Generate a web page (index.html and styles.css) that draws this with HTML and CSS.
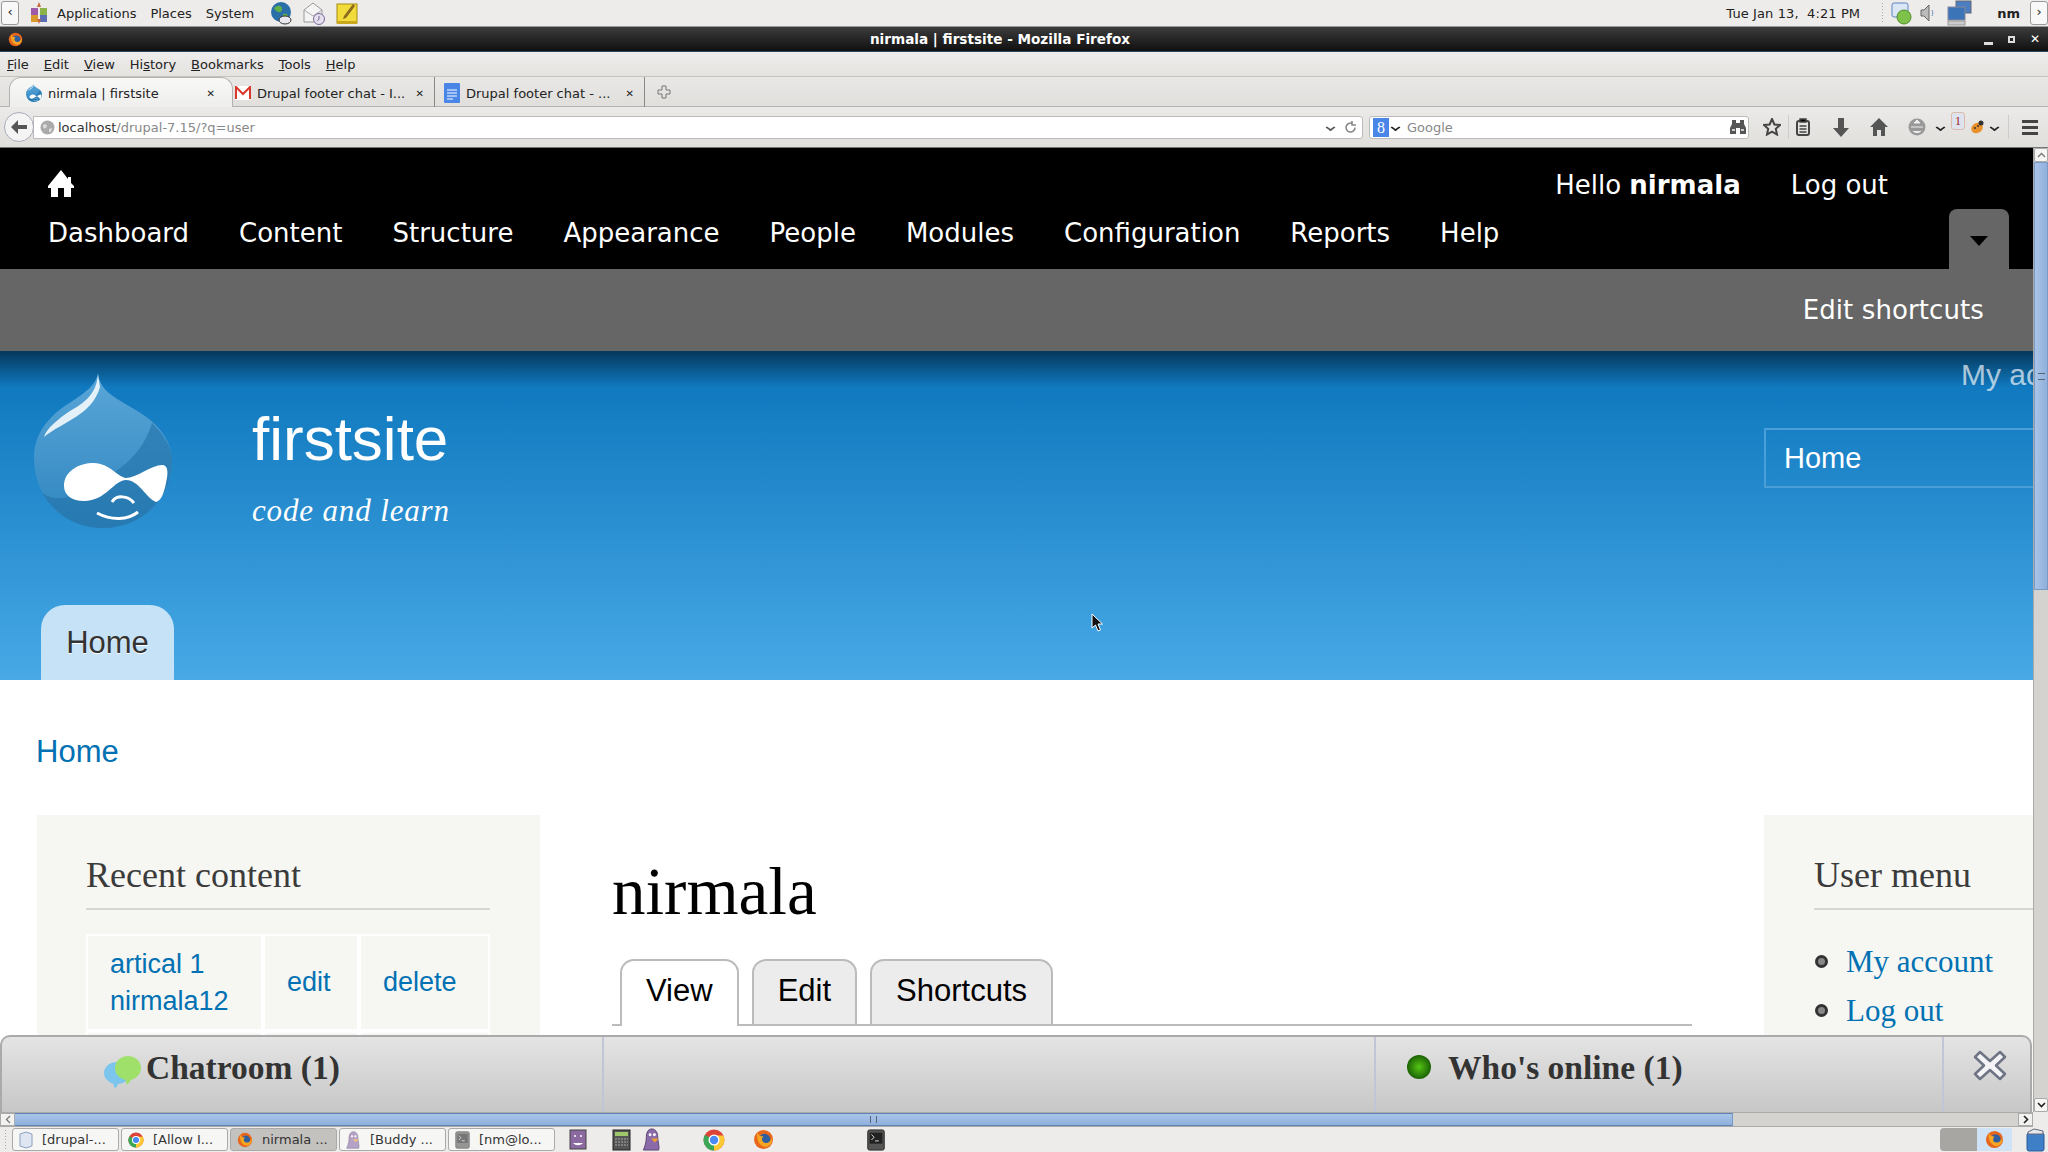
FILE: index.html
```html
<!DOCTYPE html>
<html lang="en">
<head>
    <meta charset="UTF-8">
    <title>nirmala | firstsite - Mozilla Firefox</title>
    <link rel="stylesheet" href="styles.css">
</head>
<body>
    <svg class="defs" width="0" height="0">
        <defs>
            <linearGradient id="dropFill" x1="0" y1="0" x2="0" y2="1">
                <stop offset="0" stop-color="#5aa6d8"/>
                <stop offset="1" stop-color="#2f86bf"/>
            </linearGradient>
            <symbol id="drupal" viewBox="0 0 138 156">
                <path d="M64 0C66 18 80 24 100 36C125 50 138 68 138 88C138 125 108 155 69 155C30 155 0 125 0 85C0 55 22 38 40 27C52 19 62 12 64 0Z" fill="url(#dropFill)"/>
                <path d="M118 50C134 66 138 78 138 88C138 125 108 155 69 155C40 155 20 140 8 120C30 135 55 115 82 98C100 86 112 70 118 50Z" fill="#2272a8" opacity=".6"/>
                <path d="M64 2C62 22 50 30 36 38C24 46 12 56 10 64C30 48 58 42 66 14Z" fill="#fff" opacity=".85"/>
                <path d="M30 113C30 98 45 90 60 90C75 90 85 105 92 105C102 105 118 92 128 92C135 92 134 102 132 110C130 120 127 128 122 129C112 125 105 107 92 107C80 107 72 128 50 128C38 128 30 122 30 113Z" fill="#fff"/>
                <path d="M63 140C78 148 94 147 104 139M78 129C82 122 94 122 100 130" fill="none" stroke="#fff" stroke-width="3"/>
            </symbol>
            <symbol id="firefox" viewBox="0 0 20 20">
                <circle cx="10" cy="10" r="9" fill="#e8661c"/>
                <circle cx="11" cy="10" r="5.5" fill="#2f5f9e"/>
                <path d="M4 3C3 10 6 17 13 17C17 16 19 12 18 8C17 12 14 14 11 13C8 12 8 9 10 7C7 7 5 6 4 3Z" fill="#f6a623"/>
            </symbol>
            <symbol id="chrome" viewBox="0 0 20 20">
                <circle cx="10" cy="10" r="9.5" fill="#dc4437"/>
                <path d="M10 10L1.8 5.2A9.5 9.5 0 0 0 10 19.5Z" fill="#3aa757"/>
                <path d="M10 10L10 19.5A9.5 9.5 0 0 0 18.6 6H10Z" fill="#fcc934"/>
                <circle cx="10" cy="10" r="5" fill="#fff"/>
                <circle cx="10" cy="10" r="3.8" fill="#4a8af4"/>
            </symbol>
            <symbol id="pidgin" viewBox="0 0 20 24">
                <path d="M10 1C5 1 4 6 4 11C4 16 2 20 1 23H17C18 19 16 14 16 10C16 5 14 1 10 1Z" fill="#8a6aa8" stroke="#5b4472"/>
                <circle cx="8" cy="7" r="1.5" fill="#fff"/>
                <circle cx="12.5" cy="7" r="1.5" fill="#fff"/>
                <path d="M9 11H17L13 15Z" fill="#f0a030"/>
            </symbol>
            <symbol id="terminal" viewBox="0 0 20 24">
                <rect x="1" y="1" width="18" height="22" rx="2" fill="#555" stroke="#222"/>
                <rect x="3" y="4" width="14" height="12" fill="#222"/>
                <path d="M5 6L8 9L5 12M9 13H13" fill="none" stroke="#eee"/>
            </symbol>
        </defs>
    </svg>

    <!-- desktop top panel -->
    <div class="panel">
        <span class="panel-btn">&#8249;</span>
        <svg class="app-logo" width="20" height="22" viewBox="0 0 20 22">
            <rect x="2" y="6" width="7" height="7" fill="#9c5aa8"/>
            <rect x="11" y="6" width="7" height="7" fill="#8bb34a"/>
            <rect x="2" y="13" width="7" height="7" fill="#d99a2b"/>
            <rect x="11" y="13" width="7" height="7" fill="#5d6fb3"/>
            <path d="M10 0L12 5H8ZM10 22L8 17H12Z" fill="#c8663c"/>
        </svg>
        <span class="panel-item">Applications</span>
        <span class="panel-item">Places</span>
        <span class="panel-item">System</span>
        <div class="launchers">
            <svg width="22" height="24" viewBox="0 0 22 24"><circle cx="11" cy="11" r="10" fill="#2a6fa8"/><path d="M4 7C8 3 13 5 12 9C10 13 6 11 4 7ZM13 13C17 12 19 14 17 18L13 17Z" fill="#5fae4a"/><ellipse cx="15" cy="19" rx="6" ry="4" fill="#e8e8ee" stroke="#333"/></svg>
            <svg width="22" height="24" viewBox="0 0 22 24"><path d="M1 9L10 2L19 9V21H1Z" fill="#f4f4f4" stroke="#999"/><path d="M1 9L10 15L19 9" fill="none" stroke="#aaa"/><circle cx="16" cy="18" r="5.5" fill="#e6e0ee" stroke="#7a6a98"/><path d="M16 15V18L14.5 20" fill="none" stroke="#7a6a98"/></svg>
            <svg width="22" height="24" viewBox="0 0 22 24"><rect x="1" y="3" width="20" height="19" fill="#f2dc3c" stroke="#a58a10"/><rect x="1" y="20" width="20" height="3" fill="#c9a820"/><path d="M8 15L17 3L19 5L10 17L7 18Z" fill="#8a6a1c"/></svg>
        </div>
        <div class="panel-right">
            <span class="clock">Tue Jan 13, &nbsp;4:21 PM</span>
            <span class="tray-dots"></span>
            <svg width="21" height="24" viewBox="0 0 21 24"><rect x="1" y="2" width="16" height="14" rx="2" fill="#dbe7f6" stroke="#5a86c0"/><circle cx="13" cy="16" r="7" fill="#7fc24a" stroke="#4f8f2a"/></svg>
            <svg class="tray-sound" width="15" height="22" viewBox="0 0 15 22"><path d="M1 8H4L9 3V19L4 14H1Z" fill="#bbb" stroke="#666"/><path d="M12 8C13 10 13 12 12 14" fill="none" stroke="#6a8fc0"/></svg>
            <svg class="tray-net" width="26" height="26" viewBox="0 0 26 26"><rect x="9" y="1" width="15" height="12" fill="#4a7ec0" stroke="#667"/><rect x="1" y="7" width="17" height="13" fill="#3c74b8" stroke="#889"/><rect x="1" y="21" width="17" height="4" fill="#ccc" stroke="#999"/></svg>
            <span class="panel-user">nm</span>
            <span class="panel-btn">&#8250;</span>
        </div>
    </div>

    <!-- window title -->
    <div class="titlebar">
        <svg class="title-icon" width="15" height="15"><use href="#firefox"/></svg>
        <span class="title-text">nirmala | firstsite - Mozilla Firefox</span>
        <div class="win-btns">
            <span class="win-min"></span>
            <span class="win-max"></span>
            <span class="win-close">&#10005;</span>
        </div>
    </div>

    <div class="menubar">
        <span><u>F</u>ile</span>
        <span><u>E</u>dit</span>
        <span><u>V</u>iew</span>
        <span>Hi<u>s</u>tory</span>
        <span><u>B</u>ookmarks</span>
        <span><u>T</u>ools</span>
        <span><u>H</u>elp</span>
    </div>

    <div class="tabstrip">
        <div class="ff-tab ff-tab-active">
            <svg width="16" height="18"><use href="#drupal"/></svg>
            <span class="ff-tab-label">nirmala | firstsite</span>
            <span class="ff-tab-x">&#10005;</span>
        </div>
        <div class="ff-tab ff-tab-second">
            <svg width="16" height="14" viewBox="0 0 16 14"><rect width="16" height="14" fill="#fff"/><path d="M1 13V1L8 8L15 1V13" fill="none" stroke="#d9372c" stroke-width="2"/></svg>
            <span class="ff-tab-label">Drupal footer chat - I...</span>
            <span class="ff-tab-x">&#10005;</span>
        </div>
        <div class="ff-tab">
            <svg width="16" height="20" viewBox="0 0 16 20"><rect width="16" height="20" rx="1" fill="#4a86e8"/><path d="M3 7H13M3 10H13M3 13H13M3 16H9" stroke="#fff"/></svg>
            <span class="ff-tab-label">Drupal footer chat - ...</span>
            <span class="ff-tab-x">&#10005;</span>
        </div>
        <svg class="newtab" width="14" height="14" viewBox="0 0 14 14"><path d="M5 1H9V5H13V9H9V13H5V9H1V5H5Z" fill="none" stroke="#777"/></svg>
    </div>

    <div class="navbar">
        <span class="back-btn">
            <svg width="16" height="14" viewBox="0 0 16 14"><path d="M7 0L0 7L7 14V9H16V5H7Z" fill="#555"/></svg>
        </span>
        <div class="urlbar">
            <svg width="15" height="15" viewBox="0 0 15 15"><circle cx="7.5" cy="7.5" r="7" fill="#aaa"/><path d="M3 5C6 3 8 6 6 8C4 9 3 8 3 5ZM9 9L12 8L11 12L9 12Z" fill="#ddd"/></svg>
            <span class="url-text"><b>localhost</b>/drupal-7.15/?q=user</span>
            <span class="url-drop"></span>
            <svg class="url-reload" width="13" height="13" viewBox="0 0 13 13"><path d="M11 6.5A4.5 4.5 0 1 1 8.5 2.5M8 0V4H12" fill="none" stroke="#888" stroke-width="1.6"/></svg>
        </div>
        <div class="searchbar">
            <span class="g-icon">8</span>
            <span class="url-drop dark"></span>
            <span class="search-text">Google</span>
            <svg class="binoculars" width="16" height="16" viewBox="0 0 16 16"><path d="M2 1H6V4H10V1H14V5L16 9V15H10V9H6V15H0V9L2 5Z" fill="#555"/><path d="M2 11H5M11 11H14" stroke="#ccc" stroke-width="2"/></svg>
        </div>
        <div class="nav-icons">
            <svg class="ic-star" width="18" height="18" viewBox="0 0 18 18"><path d="M9 1L11.4 6.5L17 7L12.8 10.8L14 16.5L9 13.6L4 16.5L5.2 10.8L1 7L6.6 6.5Z" fill="none" stroke="#444" stroke-width="2"/></svg>
            <span class="ic-sep"></span>
            <svg class="ic-clip" width="14" height="18" viewBox="0 0 14 18"><rect x="1" y="3" width="12" height="14" rx="2" fill="none" stroke="#444" stroke-width="2"/><path d="M4 1H10V4H4ZM3.500 8H10.500M3.500 11H10.500M3.500 14H10.500" stroke="#444" stroke-width="1.500"/></svg>
            <svg class="ic-down" width="16" height="19" viewBox="0 0 16 19"><path d="M5 0H11V10H16L8 19L0 10H5Z" fill="#555"/></svg>
            <svg class="ic-home" width="18" height="18" viewBox="0 0 18 18"><path d="M9 0L18 9H15V18H11V12H7V18H3V9H0Z" fill="#555"/></svg>
            <svg class="ic-mic" width="18" height="20" viewBox="0 0 18 20"><circle cx="9" cy="10" r="8.500" fill="#999"/><path d="M3 10H15M6 6L9 3L12 6ZM5 14C7 16 11 16 13 14" stroke="#eee" fill="#eee"/></svg>
            <span class="url-drop dark ic-chev"></span>
            <span class="ic-badge">1</span>
            <svg class="ic-bug" width="16" height="16" viewBox="0 0 16 16"><ellipse cx="8" cy="9" rx="6" ry="5" fill="#e8912c" transform="rotate(-30 8 9)"/><circle cx="12" cy="4" r="2.500" fill="#333"/><circle cx="6" cy="9" r="1" fill="#333"/><circle cx="9" cy="7" r="1" fill="#333"/></svg>
            <span class="url-drop dark ic-chev2"></span>
            <span class="ic-sep ic-sep2"></span>
            <span class="ic-burger"><i></i><i></i><i></i></span>
        </div>
    </div>

    <!-- browser content -->
    <div class="viewport">
        <div class="page">
            <div class="toolbar">
                <div class="toolbar-top">
                    <svg class="toolbar-home" width="26" height="27" viewBox="0 0 26 27"><path d="M13 0L20 9V7H23V13L26 16V18H23V27H16V18H10V27H3V18H0V16Z" fill="#fff"/></svg>
                    <div class="toolbar-user">
                        <span>Hello <b>nirmala</b></span>
                        <span>Log out</span>
                    </div>
                </div>
                <div class="toolbar-menu">
                    <a>Dashboard</a>
                    <a>Content</a>
                    <a>Structure</a>
                    <a>Appearance</a>
                    <a>People</a>
                    <a>Modules</a>
                    <a>Configuration</a>
                    <a>Reports</a>
                    <a>Help</a>
                </div>
                <div class="toolbar-toggle"><span></span></div>
            </div>
            <div class="shortcuts">Edit shortcuts</div>

            <div class="site-header">
                <div class="brand-row">
                    <svg class="logo" width="138" height="156"><use href="#drupal"/></svg>
                    <div class="site-name">
                        <h1>firstsite</h1>
                        <p>code and learn</p>
                    </div>
                    <div class="header-side">
                        <div class="secondary-menu">My account</div>
                        <div class="search-box">Home</div>
                    </div>
                </div>
                <div class="main-menu"><a>Home</a></div>
            </div>

            <div class="breadcrumb"><a>Home</a></div>

            <div class="columns">
                <div class="sidebar sidebar-left">
                    <h2>Recent content</h2>
                    <table class="recent">
                        <tr>
                            <td class="recent-title"><a>artical 1</a><br><a>nirmala12</a></td>
                            <td><a>edit</a></td>
                            <td><a>delete</a></td>
                        </tr>
                        <tr class="recent-next">
                            <td></td>
                            <td></td>
                            <td></td>
                        </tr>
                    </table>
                </div>
                <div class="main">
                    <h1 class="page-title">nirmala</h1>
                    <div class="tabs">
                        <a class="tab tab-active">View</a>
                        <a class="tab">Edit</a>
                        <a class="tab">Shortcuts</a>
                    </div>
                </div>
                <div class="sidebar sidebar-right">
                    <h2>User menu</h2>
                    <ul class="user-menu">
                        <li><a>My account</a></li>
                        <li><a>Log out</a></li>
                    </ul>
                </div>
            </div>

            <!-- footer chat stays over the page -->
            <div class="chatbar">
                <div class="chat-cell chat-room">
                    <svg width="40" height="36" viewBox="0 0 40 36"><ellipse cx="14" cy="20" rx="13" ry="11" fill="#7cc6ee"/><path d="M10 30L12 36L16 30Z" fill="#7cc6ee"/><ellipse cx="25" cy="15" rx="13" ry="12" fill="#9fe06a"/><path d="M22 26L24 32L29 26Z" fill="#9fe06a"/></svg>
                    <span>Chatroom (1)</span>
                </div>
                <div class="chat-cell chat-gap"></div>
                <div class="chat-cell chat-online">
                    <span class="online-dot"></span>
                    <span>Who's online (1)</span>
                </div>
                <div class="chat-cell chat-close">
                    <svg width="34" height="33" viewBox="0 0 34 33"><path d="M7 3L17 12L27 3L32 8L23 16.500L32 25L27 30L17 21L7 30L2 25L11 16.500L2 8Z" fill="#f4f4f6" stroke="#6f7484" stroke-width="2.500" stroke-linejoin="round"/></svg>
                </div>
            </div>

            <svg class="cursor" width="12" height="19" viewBox="0 0 12 19"><path d="M1 1V15L4.500 12L7 18L9.500 17L7 11H11.500Z" fill="#111" stroke="#fff"/></svg>
        </div>
        <div class="vscroll">
            <span class="vbtn"><svg width="9" height="6" viewBox="0 0 9 6"><path d="M1 5L4.500 1.500L8 5" fill="none" stroke="#777" stroke-width="1.300"/></svg></span>
            <div class="vthumb"><span></span></div>
            <span class="vtrack"></span>
            <span class="vbtn"><svg width="9" height="6" viewBox="0 0 9 6"><path d="M1 1L4.500 4.500L8 1" fill="none" stroke="#222" stroke-width="1.600"/></svg></span>
        </div>
    </div>

    <div class="hscroll-row">
        <div class="hscroll">
            <span class="hbtn"><svg width="6" height="9" viewBox="0 0 6 9"><path d="M5 1L1.500 4.500L5 8" fill="none" stroke="#777" stroke-width="1.300"/></svg></span>
            <div class="hthumb"><span></span></div>
            <span class="htrack"></span>
            <span class="hbtn"><svg width="6" height="9" viewBox="0 0 6 9"><path d="M1 1L4.500 4.500L1 8" fill="none" stroke="#222" stroke-width="1.600"/></svg></span>
        </div>
    </div>

    <!-- desktop bottom panel -->
    <div class="taskbar">
        <span class="tray-dots task-dots"></span>
        <div class="task"><svg width="14" height="18" viewBox="0 0 14 18"><path d="M1 3L7 1L13 3V15L7 17L1 15Z" fill="#dfe6f2" stroke="#8aa0c0"/></svg><span>[drupal-...</span></div>
        <div class="task"><svg width="16" height="16"><use href="#chrome"/></svg><span>[Allow I...</span></div>
        <div class="task task-active"><svg width="16" height="16"><use href="#firefox"/></svg><span>nirmala ...</span></div>
        <div class="task"><svg class="faded" width="15" height="18"><use href="#pidgin"/></svg><span>[Buddy ...</span></div>
        <div class="task"><svg class="faded" width="15" height="18"><use href="#terminal"/></svg><span>[nm@lo...</span></div>
        <div class="quick">
            <svg class="q1" width="18" height="21" viewBox="0 0 18 21"><rect x="1" y="1" width="16" height="19" fill="#8a6aa0" stroke="#444"/><path d="M4 14C7 17 11 17 14 14Z" fill="#fff"/><circle cx="6" cy="7" r="1" fill="#fff"/><circle cx="12" cy="7" r="1" fill="#fff"/></svg>
            <svg class="q2" width="19" height="22" viewBox="0 0 19 22"><rect x="1" y="1" width="17" height="20" fill="#555" stroke="#222"/><rect x="3" y="3" width="13" height="4" fill="#9fc76a"/><path d="M3 10H16M3 13H16M3 16H16" stroke="#aaa" stroke-dasharray="2 1"/></svg>
            <svg class="q3" width="20" height="23"><use href="#pidgin"/></svg>
            <svg class="q4" width="22" height="22"><use href="#chrome"/></svg>
            <svg class="q5" width="21" height="21"><use href="#firefox"/></svg>
            <svg class="q6" width="20" height="22"><use href="#terminal"/></svg>
        </div>
        <div class="task-right">
            <span class="pager-a"></span>
            <span class="pager-b"><svg width="19" height="19"><use href="#firefox"/></svg></span>
            <svg class="trash" width="19" height="24" viewBox="0 0 19 24"><rect x="1" y="5" width="17" height="18" rx="2" fill="#3f7fc8" stroke="#2a5a98"/><path d="M2 4L8 1L17 3L17 6H2Z" fill="#e4e8ee" stroke="#667"/></svg>
        </div>
    </div>
</body>
</html>
```
FILE: styles.css
```css
* {
    margin: 0;
    padding: 0;
    box-sizing: border-box;
}

html, body {
    width: 2048px;
    height: 1152px;
    overflow: hidden;
}

body {
    font-family: "DejaVu Sans", sans-serif;
    font-size: 13px;
    color: #222;
    background-color: #edecea;
    display: flex;
    flex-direction: column;
}

svg {
    flex: none;
    display: block;
}

.defs {
    position: absolute;
}

/* top panel */
.panel {
    height: 27px;
    flex: none;
    display: flex;
    align-items: center;
    background-color: #edecea;
    border-bottom: 1px solid #9a9a98;
    padding-left: 1px;
}

.panel-btn {
    width: 18px;
    height: 24px;
    border: 1px solid #999;
    border-radius: 3px;
    background-color: #f8f8f8;
    text-align: center;
    line-height: 20px;
    flex: none;
}

.app-logo {
    margin-left: 10px;
    margin-right: 8px;
}

.panel-item {
    margin-right: 14px;
}

.launchers {
    display: flex;
    gap: 11px;
    margin-left: 2px;
}

.panel-right {
    margin-left: auto;
    display: flex;
    align-items: center;
}

.clock {
    margin-right: 21px;
    letter-spacing: .1px;
}

.tray-dots {
    width: 4px;
    height: 22px;
    margin-right: 6px;
    background-image: radial-gradient(#aaa 1px, transparent 1px);
    background-size: 3px 3px;
}

.tray-sound {
    margin-left: 8px;
}

.tray-net {
    margin-left: 12px;
}

.panel-user {
    font-weight: bold;
    margin-left: 24px;
    margin-right: 10px;
}

/* window title */
.titlebar {
    height: 25px;
    flex: none;
    position: relative;
    display: flex;
    align-items: center;
    justify-content: center;
    color: #fff;
    font-weight: bold;
    font-size: 13.6px;
    background: linear-gradient(#3c3c3c, #101010);
    border-bottom: 1px solid #2d4a63;
}

.title-icon {
    position: absolute;
    left: 8px;
    top: 5px;
}

.title-text {
    margin-right: 48px;
}

.win-btns {
    position: absolute;
    right: 0;
    top: 0;
    height: 24px;
    display: flex;
    align-items: center;
}

.win-min {
    width: 9px;
    height: 3px;
    background-color: #ddd;
    margin-right: 15px;
    margin-top: 8px;
}

.win-max {
    width: 7px;
    height: 7px;
    border: 2px solid #ddd;
    margin-right: 15px;
}

.win-close {
    font-size: 12px;
    margin-right: 8px;
}

/* firefox chrome */
.menubar {
    height: 25px;
    flex: none;
    display: flex;
    align-items: center;
    gap: 15px;
    padding-left: 7px;
    background: linear-gradient(#eeedeb, #e4e3e0);
    border-bottom: 1px solid #c4c3c0;
}

.tabstrip {
    height: 30px;
    flex: none;
    display: flex;
    align-items: center;
    padding-left: 9px;
    background: linear-gradient(#e9e8e6, #e0dfdc);
    border-bottom: 1px solid #b4b3b0;
}

.ff-tab {
    height: 30px;
    width: 210px;
    display: flex;
    align-items: center;
    padding: 3px 10px 0 9px;
    border-right: 1px solid #888;
}

.ff-tab-active {
    width: 224px;
    height: 30px;
    padding-left: 16px;
    padding-right: 17px;
    padding-top: 1px;
    background: linear-gradient(#f8f8f7, #eeeeec);
    border: 1px solid #b4b3b0;
    border-bottom: 0;
    border-radius: 12px 12px 0 0;
    margin-top: 1px;
}

.ff-tab-second {
    width: 202px;
    padding-left: 2px;
}

.ff-tab-label {
    margin-left: 6px;
    white-space: nowrap;
    overflow: hidden;
}

.ff-tab-x {
    margin-left: auto;
    font-size: 10px;
    font-weight: bold;
}

.newtab {
    margin-left: 12px;
}

.navbar {
    height: 41px;
    flex: none;
    display: flex;
    align-items: center;
    background: linear-gradient(#ebeae8, #e0dfdc);
    border-bottom: 1px solid #777;
    padding-left: 4px;
}

.back-btn {
    width: 30px;
    height: 30px;
    flex: none;
    border: 1px solid #aab;
    border-radius: 50%;
    background-color: #f4f4f4;
    display: flex;
    align-items: center;
    justify-content: center;
    z-index: 1;
}

.urlbar {
    width: 1330px;
    height: 23px;
    margin-left: -1px;
    flex: none;
    background-color: #fff;
    border: 1px solid #bbb;
    border-radius: 0 3px 3px 0;
    display: flex;
    align-items: center;
    padding-left: 6px;
}

.url-text {
    font-size: 13px;
    color: #888;
    margin-left: 3px;
    padding-top: 1px;
}

.url-text b {
    font-weight: normal;
    color: #333;
}

.url-drop {
    width: 7px;
    height: 7px;
    border-right: 2px solid #555;
    border-bottom: 2px solid #555;
    transform: scale(1, .7) rotate(45deg);
    margin-left: auto;
    margin-right: 4px;
    flex: none;
}

.url-reload {
    margin: 0 5px 0 6px;
}

.searchbar {
    width: 380px;
    height: 23px;
    margin-left: 6px;
    flex: none;
    background-color: #fff;
    border: 1px solid #bbb;
    border-radius: 3px;
    display: flex;
    align-items: center;
    padding-left: 3px;
}

.g-icon {
    width: 16px;
    height: 19px;
    background-color: #4a86e8;
    color: #fff;
    text-align: center;
    font-family: "Liberation Serif", serif;
    font-size: 16px;
    line-height: 19px;
}

.url-drop.dark {
    margin-left: 3px;
    margin-right: 0;
    border-color: #222;
}

.search-text {
    font-size: 13px;
    color: #888;
    margin-left: 8px;
    padding-top: 1px;
}

.binoculars {
    margin-left: auto;
    margin-right: 2px;
}

.nav-icons {
    flex: 1;
    display: flex;
    align-items: center;
    position: relative;
    height: 100%;
}

.ic-star {
    margin-left: 14px;
}

.ic-sep {
    width: 1px;
    height: 24px;
    background-color: #ccc;
    margin-left: 7px;
}

.ic-clip {
    margin-left: 7px;
}

.ic-down {
    margin-left: 23px;
}

.ic-home {
    margin-left: 21px;
}

.ic-mic {
    margin-left: 20px;
}

.url-drop.ic-chev {
    margin-left: 11px;
}

.ic-badge {
    width: 14px;
    height: 18px;
    background-color: #dde4f0;
    border: 1px solid #dba;
    border-radius: 3px;
    color: #a01010;
    font-family: "Liberation Serif", serif;
    font-size: 12px;
    text-align: center;
    line-height: 16px;
    margin-left: 7px;
    margin-top: -12px;
}

.ic-bug {
    margin-left: 4px;
}

.url-drop.ic-chev2 {
    margin-left: 6px;
}

.ic-sep2 {
    margin-left: 10px;
}

.ic-burger {
    display: flex;
    flex-direction: column;
    gap: 3px;
    margin-left: 13px;
}

.ic-burger i {
    width: 16px;
    height: 3px;
    background-color: #444;
    display: block;
}

/* viewport */
.viewport {
    height: 964px;
    flex: none;
    display: flex;
    background-color: #fff;
    overflow: hidden;
}

.page {
    width: 2033px;
    height: 964px;
    position: relative;
    overflow: hidden;
    flex: none;
}

.vscroll {
    width: 15px;
    flex: none;
    display: flex;
    flex-direction: column;
    background-color: #d5d3d0;
    border-left: 1px solid #aaa;
}

.vbtn {
    height: 14px;
    flex: none;
    background-color: #f6f6f4;
    border: 1px solid #aaa;
    border-radius: 2px;
    display: flex;
    align-items: center;
    justify-content: center;
}

.vthumb {
    height: 428px;
    flex: none;
    background: linear-gradient(90deg, #a9c4e8, #8fb0dc);
    border: 1px solid #7a9ac6;
    display: flex;
    align-items: center;
    justify-content: center;
}

.vthumb span {
    width: 7px;
    height: 7px;
    border-top: 1px solid #567;
    border-bottom: 1px solid #567;
}

.vtrack {
    flex: 1;
}

.hscroll-row {
    height: 15px;
    flex: none;
}

.hscroll {
    width: 2033px;
    height: 15px;
    display: flex;
    background-color: #d5d3d0;
    border-top: 1px solid #aaa;
    border-bottom: 1px solid #aaa;
}

.hbtn {
    width: 15px;
    flex: none;
    background-color: #f2f2f0;
    border: 1px solid #aaa;
    display: flex;
    align-items: center;
    justify-content: center;
}

.hthumb {
    width: 1718px;
    flex: none;
    background: linear-gradient(#a9c4e8, #8fb0dc);
    border-top: 1px solid #5f83b4;
    border-bottom: 1px solid #5f83b4;
    border-right: 1px solid #7a9ac6;
    display: flex;
    align-items: center;
    justify-content: center;
}

.hthumb span {
    width: 7px;
    height: 7px;
    border-left: 1px solid #567;
    border-right: 1px solid #567;
}

.htrack {
    flex: 1;
}

/* admin toolbar */
.toolbar {
    height: 121px;
    background-color: #000;
    color: #fff;
    font-size: 26px;
    position: relative;
}

.toolbar-top {
    height: 75px;
    display: flex;
    align-items: flex-end;
    padding: 0 145px 22px 48px;
    justify-content: space-between;
}

.toolbar-home {
    margin-bottom: 4px;
}

.toolbar-user {
    display: flex;
    gap: 50px;
    line-height: 32px;
}

.toolbar-menu {
    display: flex;
    gap: 50px;
    padding-left: 48px;
    line-height: 32px;
    margin-top: -6px;
}

.toolbar-toggle {
    position: absolute;
    left: 1949px;
    top: 61px;
    width: 60px;
    height: 60px;
    background-color: #666;
    border-radius: 8px 8px 0 0;
    display: flex;
    justify-content: center;
    padding-top: 27px;
}

.toolbar-toggle span {
    width: 0;
    height: 0;
    border-left: 9px solid transparent;
    border-right: 9px solid transparent;
    border-top: 10px solid #000;
}

.shortcuts {
    height: 82px;
    background-color: #666;
    color: #fff;
    font-size: 26px;
    letter-spacing: .1px;
    line-height: 82px;
    text-align: right;
    padding-right: 49px;
}

/* site header */
.site-header {
    height: 329px;
    font-family: "Liberation Sans", sans-serif;
    color: #fff;
    background: linear-gradient(#05375a 0, #1079bf 36px, #48a9e6 100%);
}

.brand-row {
    height: 254px;
    display: flex;
    align-items: flex-start;
    padding-left: 34px;
}

.logo {
    margin-top: 22px;
}

.site-name {
    margin-left: 80px;
    margin-top: 53px;
}

.site-name h1 {
    font-size: 62px;
    font-weight: normal;
    line-height: 70px;
}

.site-name p {
    font-family: "Liberation Serif", serif;
    font-style: italic;
    font-size: 31px;
    letter-spacing: .85px;
    line-height: 40px;
    margin-top: 17px;
}

.header-side {
    margin-left: auto;
    width: 269px;
    overflow: hidden;
}

.secondary-menu {
    font-size: 30px;
    color: #fff;
    opacity: .65;
    white-space: nowrap;
    padding-left: 197px;
    line-height: 34px;
    margin-top: 7px;
}

.search-box {
    height: 60px;
    width: 300px;
    margin-top: 36px;
    font-size: 29px;
    line-height: 57px;
    padding-left: 18px;
    border: 2px solid #4a9fd8;
}

.main-menu {
    height: 75px;
    padding-left: 41px;
}

.main-menu a {
    display: block;
    width: 133px;
    height: 75px;
    background-color: #c6e2f6;
    border-radius: 24px 24px 0 0;
    color: #333;
    font-size: 31px;
    line-height: 76px;
    text-align: center;
    text-shadow: 0 1px 0 #fff;
}

/* page body */
.breadcrumb {
    height: 135px;
    padding: 54px 0 0 36px;
    font-family: "Liberation Sans", sans-serif;
    font-size: 31px;
    line-height: 36px;
    color: #0071b3;
}

.columns {
    display: flex;
    padding-left: 37px;
    gap: 72px;
    font-family: "Liberation Sans", sans-serif;
}

.sidebar {
    background-color: #f6f6f2;
    padding: 40px 0 0 49px;
    height: 400px;
    flex: none;
}

.sidebar-left {
    width: 503px;
    padding-right: 50px;
}

.sidebar-right {
    width: 270px;
    padding-left: 50px;
}

.sidebar h2 {
    font-family: "Liberation Serif", serif;
    font-weight: normal;
    font-size: 36px;
    line-height: 40px;
    color: #3b3b3b;
    padding-bottom: 13px;
    border-bottom: 2px solid #d6d6d6;
}

.recent {
    width: 404px;
    margin-top: 24px;
    border-collapse: separate;
    border-spacing: 0;
    table-layout: fixed;
    font-size: 27px;
    line-height: 37px;
    color: #0071b3;
}

.recent td {
    border: 2px solid #fff;
    padding: 0 0 0 22px;
    height: 97px;
}

.recent td:nth-child(1) {
    width: 177px;
}

.recent td:nth-child(2) {
    width: 96px;
}

.recent-next td {
    height: 60px;
}

.main {
    width: 1080px;
    flex: none;
}

.page-title {
    font-family: "Liberation Serif", serif;
    font-weight: normal;
    font-size: 67px;
    line-height: 76px;
    color: #000;
    margin-top: 38px;
}

.tabs {
    display: flex;
    gap: 13px;
    margin-top: 30px;
    padding-left: 8px;
    border-bottom: 2px solid #bbb;
    font-size: 31px;
    color: #000;
}

.tab {
    height: 65px;
    padding: 0 24px;
    line-height: 60px;
    background-color: #ececec;
    border: 2px solid #bbb;
    border-bottom: 0;
    border-radius: 14px 14px 0 0;
}

.tab-active {
    background-color: #fff;
    height: 67px;
    margin-bottom: -2px;
}

.user-menu {
    list-style: none;
    margin-top: 27px;
    font-family: "Liberation Serif", serif;
    font-size: 31px;
    line-height: 49px;
    color: #0071b3;
}

.user-menu li {
    display: flex;
    align-items: center;
}

.user-menu li::before {
    content: "";
    width: 7px;
    height: 7px;
    border-radius: 50%;
    background-color: #888;
    border: 3px solid #333;
    margin-left: 1px;
    margin-right: 18px;
    flex: none;
}

/* footer chat */
.chatbar {
    position: absolute;
    left: 0;
    bottom: 0;
    width: 2032px;
    height: 77px;
    display: flex;
    background: linear-gradient(#e4e4e4, #c7c7c7);
    border: 2px solid #aaa;
    border-bottom: 0;
    border-radius: 10px 10px 0 0;
    font-family: "Liberation Serif", serif;
    font-weight: bold;
    font-size: 33.5px;
    color: #333;
}

.chat-cell {
    display: flex;
    align-items: center;
    height: 75px;
    border-right: 2px solid #c0c6d6;
}

.chat-room {
    width: 602px;
    padding-left: 101px;
    padding-bottom: 14px;
}

.chat-room svg {
    margin-right: 3px;
    margin-top: 6px;
}

.chat-gap {
    width: 772px;
}

.chat-online {
    width: 568px;
    padding-left: 31px;
    padding-bottom: 14px;
}

.online-dot {
    width: 24px;
    height: 24px;
    border-radius: 50%;
    margin-right: 17px;
    margin-bottom: 2px;
    background: radial-gradient(#55c415, #1f6a05 65%, #0f3a02);
}

.chat-close {
    flex: 1;
    border-right: 0;
    padding-left: 29px;
    padding-bottom: 18px;
}

.cursor {
    position: absolute;
    left: 1091px;
    top: 465px;
}

/* bottom panel */
.taskbar {
    height: 25px;
    flex: none;
    display: flex;
    align-items: center;
    background-color: #edecea;
    padding-left: 4px;
    color: #333;
}

.task-dots {
    margin-right: 4px;
}

.task {
    width: 107px;
    height: 23px;
    margin-right: 2px;
    display: flex;
    align-items: center;
    gap: 9px;
    padding-left: 6px;
    background-color: #f6f6f5;
    border: 1px solid #aaa;
    border-radius: 3px;
    white-space: nowrap;
}

.task-active {
    background-color: #c4c2be;
}

.faded {
    opacity: .6;
}

.quick {
    display: flex;
    align-items: center;
    margin-left: 12px;
}

.q2 {
    margin-left: 25px;
}

.q3 {
    margin-left: 11px;
}

.q4 {
    margin-left: 41px;
}

.q5 {
    margin-left: 28px;
}

.q6 {
    margin-left: 92px;
}

.task-right {
    margin-left: auto;
    display: flex;
    align-items: center;
    padding-right: 3px;
}

.pager-a {
    width: 37px;
    height: 23px;
    background-color: #a8a6a2;
    border-radius: 4px 0 0 4px;
}

.pager-b {
    width: 35px;
    height: 23px;
    background-color: #cfe2f6;
    display: flex;
    align-items: center;
    justify-content: center;
    margin-right: 14px;
}
```
